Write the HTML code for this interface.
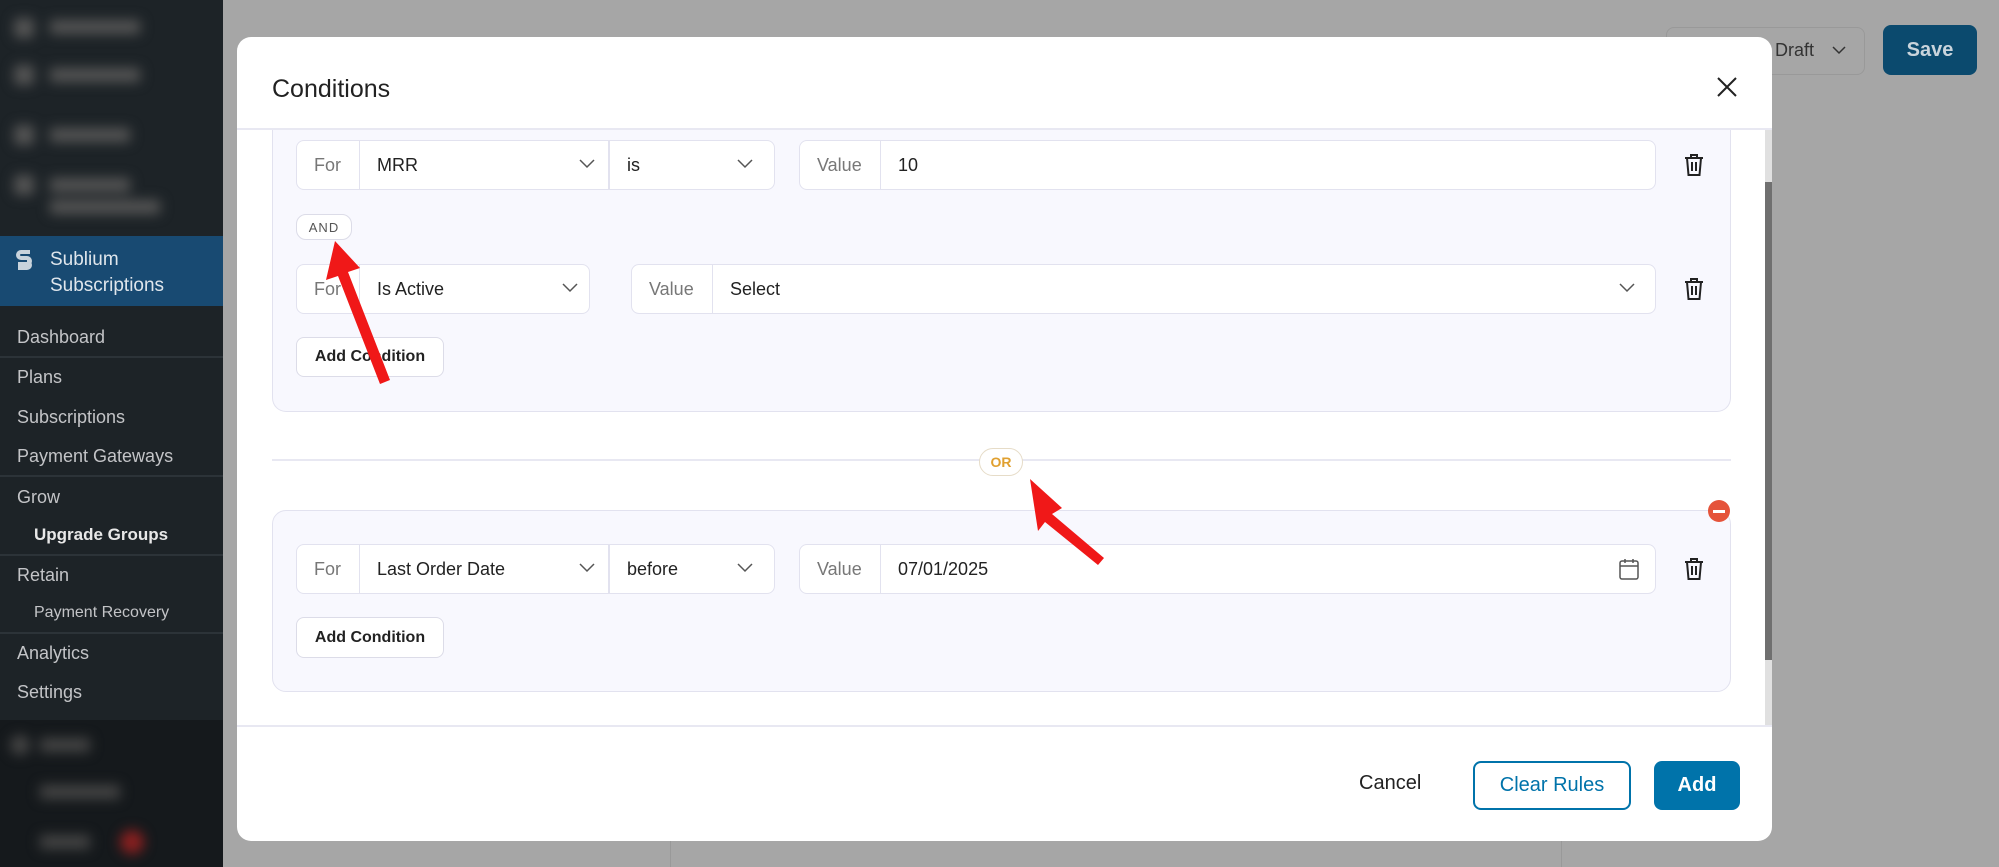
<!DOCTYPE html>
<html><head><meta charset="utf-8"><style>
*{box-sizing:border-box;margin:0;padding:0}
body{width:1999px;height:867px;overflow:hidden;background:#a6a6a6;font-family:"Liberation Sans",sans-serif;position:relative}
.abs{position:absolute}
.sb{left:0;top:0;width:223px;height:867px;background:#1d2327}
.blur{filter:blur(6px)}
.mi{position:absolute;left:17px;color:#c3c4c7;font-size:18px}
.sep{position:absolute;left:0;width:223px;height:2px;background:#2c3338}
.modal{left:237px;top:37px;width:1535px;height:804px;background:#fff;border-radius:14px;overflow:hidden}
.grp{position:absolute;background:#f8f8fe;border:1.5px solid #e2e2ef;border-radius:14px}
.box{position:absolute;background:#fff;border:1.5px solid #e2e2ef;border-radius:8px;height:50px;font-size:18px;color:#222}
.lbl{position:absolute;top:0;height:100%;display:flex;align-items:center;color:#777;border-right:1.5px solid #e2e2ef;padding-left:17px}
.txt{position:absolute;top:0;height:100%;display:flex;align-items:center}
.chev{position:absolute;top:18px}
.btn{position:absolute;background:#fff;border:1.5px solid #dcdce8;border-radius:8px;font-size:16px;font-weight:bold;color:#222;display:flex;align-items:center;justify-content:center}
</style></head><body>
<div class="abs sb">
 <div class="blur">
  <div class="abs" style="left:14px;top:18px;width:20px;height:20px;background:#555;border-radius:4px"></div><div class="abs" style="left:50px;top:20px;width:90px;height:14px;background:#555"></div>
  <div class="abs" style="left:14px;top:65px;width:20px;height:20px;background:#555;border-radius:4px"></div><div class="abs" style="left:50px;top:68px;width:90px;height:14px;background:#555"></div>
  <div class="abs" style="left:14px;top:125px;width:20px;height:20px;background:#555;border-radius:4px"></div><div class="abs" style="left:50px;top:128px;width:80px;height:14px;background:#555"></div>
  <div class="abs" style="left:14px;top:175px;width:20px;height:20px;background:#555;border-radius:4px"></div><div class="abs" style="left:50px;top:178px;width:80px;height:14px;background:#555"></div><div class="abs" style="left:50px;top:200px;width:110px;height:14px;background:#555"></div>
 </div>
 <div class="abs" style="left:0;top:236px;width:223px;height:70px;background:#184a72"></div>
 <svg class="abs" style="left:14px;top:248px" width="20" height="24" viewBox="0 0 20 24"><path d="M16 4H7a3 3 0 0 0 0 6h6a3 3 0 0 1 0 6H4M4 20h9a3 3 0 0 0 0-6" stroke="#c8d3dc" stroke-width="4" fill="none"/></svg>
 <div class="abs" style="left:50px;top:247px;color:#dfe6ec;font-size:19px;line-height:26px">Sublium<br>Subscriptions</div>
 <div class="mi" style="top:327px">Dashboard</div>
 <div class="sep" style="top:356px"></div>
 <div class="mi" style="top:367px">Plans</div>
 <div class="mi" style="top:407px">Subscriptions</div>
 <div class="mi" style="top:446px">Payment Gateways</div>
 <div class="sep" style="top:475px"></div>
 <div class="mi" style="top:487px">Grow</div>
 <div class="mi" style="top:525px;left:34px;color:#e8e8e8;font-weight:bold;font-size:17px">Upgrade Groups</div>
 <div class="sep" style="top:554px"></div>
 <div class="mi" style="top:565px">Retain</div>
 <div class="mi" style="top:604px;left:34px;font-size:16px">Payment Recovery</div>
 <div class="sep" style="top:632px"></div>
 <div class="mi" style="top:643px">Analytics</div>
 <div class="mi" style="top:682px">Settings</div>
 <div class="abs" style="left:0;top:720px;width:223px;height:147px;background:#15191c"></div>
 <div class="blur">
  <div class="abs" style="left:10px;top:735px;width:20px;height:20px;background:#444;border-radius:10px"></div><div class="abs" style="left:40px;top:738px;width:50px;height:14px;background:#444"></div>
  <div class="abs" style="left:40px;top:785px;width:80px;height:14px;background:#444"></div>
  <div class="abs" style="left:40px;top:835px;width:50px;height:14px;background:#444"></div><div class="abs" style="left:120px;top:830px;width:24px;height:24px;background:#8a2020;border-radius:12px"></div>
 </div>
</div>
<div class="abs" style="left:1666px;top:27px;width:199px;height:48px;border:1.5px solid #999;border-radius:8px"></div>
<div class="abs" style="left:1775px;top:40px;font-size:18px;color:#333">Draft</div>
<svg class="abs" style="left:1832px;top:46px" width="14" height="9"><path d="M1 1l6 6 6-6" stroke="#333" stroke-width="1.5" fill="none"/></svg>
<div class="abs" style="left:1883px;top:25px;width:94px;height:50px;background:#0b4a6e;border-radius:8px;color:#c9d4dc;font-size:20px;font-weight:bold;display:flex;align-items:center;justify-content:center">Save</div>
<div class="abs" style="left:670px;top:841px;width:1px;height:26px;background:#999"></div>
<div class="abs" style="left:1561px;top:841px;width:1px;height:26px;background:#999"></div>

<div class="abs modal">
 <div class="abs" style="left:35px;top:38px;font-size:25px;color:#222">Conditions</div>
 <svg class="abs" style="left:1480px;top:40px" width="20" height="20"><path d="M1 1l18 18M19 1L1 19" stroke="#222" stroke-width="2"/></svg>
 <div class="abs" style="left:0;top:91px;width:1535px;height:2px;background:#e8e8f2"></div>
 <div class="abs" style="left:1528px;top:93px;width:7px;height:595px;background:#e0e0e0"></div>
 <div class="abs" style="left:1528px;top:145px;width:7px;height:478px;background:#707070"></div>

 <div class="grp" style="left:35px;top:93px;width:1459px;height:282px;border-top:none;border-radius:0 0 14px 14px"></div>
 <div class="box" style="left:59px;top:103px;width:479px">
  <div class="lbl" style="left:0;width:63px">For</div>
  <div class="txt" style="left:80px">MRR</div>
  <svg class="chev" style="left:282px" width="16" height="10"><path d="M1 1l7 7 7-7" stroke="#555" stroke-width="1.5" fill="none"/></svg>
  <div style="position:absolute;left:311px;top:0;width:1.5px;height:100%;background:#e2e2ef"></div>
  <div class="txt" style="left:330px">is</div>
  <svg class="chev" style="left:440px" width="16" height="10"><path d="M1 1l7 7 7-7" stroke="#555" stroke-width="1.5" fill="none"/></svg>
 </div>
 <div class="box" style="left:562px;top:103px;width:857px">
  <div class="lbl" style="left:0;width:81px">Value</div>
  <div class="txt" style="left:98px">10</div>
 </div>
 <div class="abs" style="left:59px;top:177px;width:56px;height:26px;background:#fff;border:1.5px solid #dcdce8;border-radius:10px;font-size:13px;color:#555;display:flex;align-items:center;justify-content:center;letter-spacing:1px">AND</div>
 <div class="box" style="left:59px;top:227px;width:294px">
  <div class="lbl" style="left:0;width:63px">For</div>
  <div class="txt" style="left:80px">Is Active</div>
  <svg class="chev" style="left:265px" width="16" height="10"><path d="M1 1l7 7 7-7" stroke="#555" stroke-width="1.5" fill="none"/></svg>
 </div>
 <div class="box" style="left:394px;top:227px;width:1025px">
  <div class="lbl" style="left:0;width:81px">Value</div>
  <div class="txt" style="left:98px">Select</div>
  <svg class="chev" style="left:987px" width="16" height="10"><path d="M1 1l7 7 7-7" stroke="#555" stroke-width="1.5" fill="none"/></svg>
 </div>
 <div class="btn" style="left:59px;top:300px;width:148px;height:40px">Add Condition</div>
 <svg class="abs" style="left:1447px;top:116px" width="20" height="24" viewBox="0 0 20 24"><path d="M1 5h18M7 5V2h6v3M3 5l1.5 17h11L17 5M8 9v9M12 9v9" stroke="#222" stroke-width="2" fill="none"/></svg>
 <svg class="abs" style="left:1447px;top:240px" width="20" height="24" viewBox="0 0 20 24"><path d="M1 5h18M7 5V2h6v3M3 5l1.5 17h11L17 5M8 9v9M12 9v9" stroke="#222" stroke-width="2" fill="none"/></svg>
 <div class="abs" style="left:35px;top:422px;width:1459px;height:2px;background:#e8e8f2"></div>
 <div class="abs" style="left:742px;top:411px;width:44px;height:28px;background:#fff;border:1.5px solid #e6dcc8;border-radius:14px;font-size:14px;color:#e0a030;font-weight:bold;display:flex;align-items:center;justify-content:center">OR</div>
 <div class="grp" style="left:35px;top:473px;width:1459px;height:182px"></div>
 <div class="abs" style="left:1471px;top:463px;width:22px;height:22px;border-radius:11px;background:#e5533a"></div>
 <div class="abs" style="left:1476px;top:473px;width:12px;height:2.5px;background:#fff"></div>
 <div class="box" style="left:59px;top:507px;width:479px">
  <div class="lbl" style="left:0;width:63px">For</div>
  <div class="txt" style="left:80px">Last Order Date</div>
  <svg class="chev" style="left:282px" width="16" height="10"><path d="M1 1l7 7 7-7" stroke="#555" stroke-width="1.5" fill="none"/></svg>
  <div style="position:absolute;left:311px;top:0;width:1.5px;height:100%;background:#e2e2ef"></div>
  <div class="txt" style="left:330px">before</div>
  <svg class="chev" style="left:440px" width="16" height="10"><path d="M1 1l7 7 7-7" stroke="#555" stroke-width="1.5" fill="none"/></svg>
 </div>
 <div class="box" style="left:562px;top:507px;width:857px">
  <div class="lbl" style="left:0;width:81px">Value</div>
  <div class="txt" style="left:98px">07/01/2025</div>
  <svg style="position:absolute;left:819px;top:13px" width="20" height="22" viewBox="0 0 20 22"><rect x="1" y="3" width="18" height="18" rx="2" stroke="#555" stroke-width="1.5" fill="none"/><path d="M1 8h18M6 1v4M14 1v4" stroke="#555" stroke-width="1.5"/></svg>
 </div>
 <svg class="abs" style="left:1447px;top:520px" width="20" height="24" viewBox="0 0 20 24"><path d="M1 5h18M7 5V2h6v3M3 5l1.5 17h11L17 5M8 9v9M12 9v9" stroke="#222" stroke-width="2" fill="none"/></svg>
 <div class="btn" style="left:59px;top:580px;width:148px;height:41px">Add Condition</div>
 <div class="abs" style="left:0;top:688px;width:1535px;height:2px;background:#e8e8f2"></div>
 <div class="abs" style="left:1122px;top:735px;font-size:20px;color:#222">Cancel</div>
 <div class="abs" style="left:1236px;top:724px;width:158px;height:49px;border:2px solid #0073aa;border-radius:8px;color:#0073aa;font-size:20px;display:flex;align-items:center;justify-content:center">Clear Rules</div>
 <div class="abs" style="left:1417px;top:724px;width:86px;height:49px;background:#0073aa;border-radius:8px;color:#fff;font-size:20px;font-weight:bold;display:flex;align-items:center;justify-content:center">Add</div>
</div>
<svg class="abs" style="left:0;top:0" width="1999" height="867">
 <path d="M335 241 L326 280 L338 276 L380 384 L390 380 L348 272 L360 268 Z" fill="#f01818"/>
 <path d="M1030 479 L1062 508 L1052 514 L1104 558 L1098 565 L1045 522 L1038 531 Z" fill="#f01818"/>
</svg>
</body></html>
